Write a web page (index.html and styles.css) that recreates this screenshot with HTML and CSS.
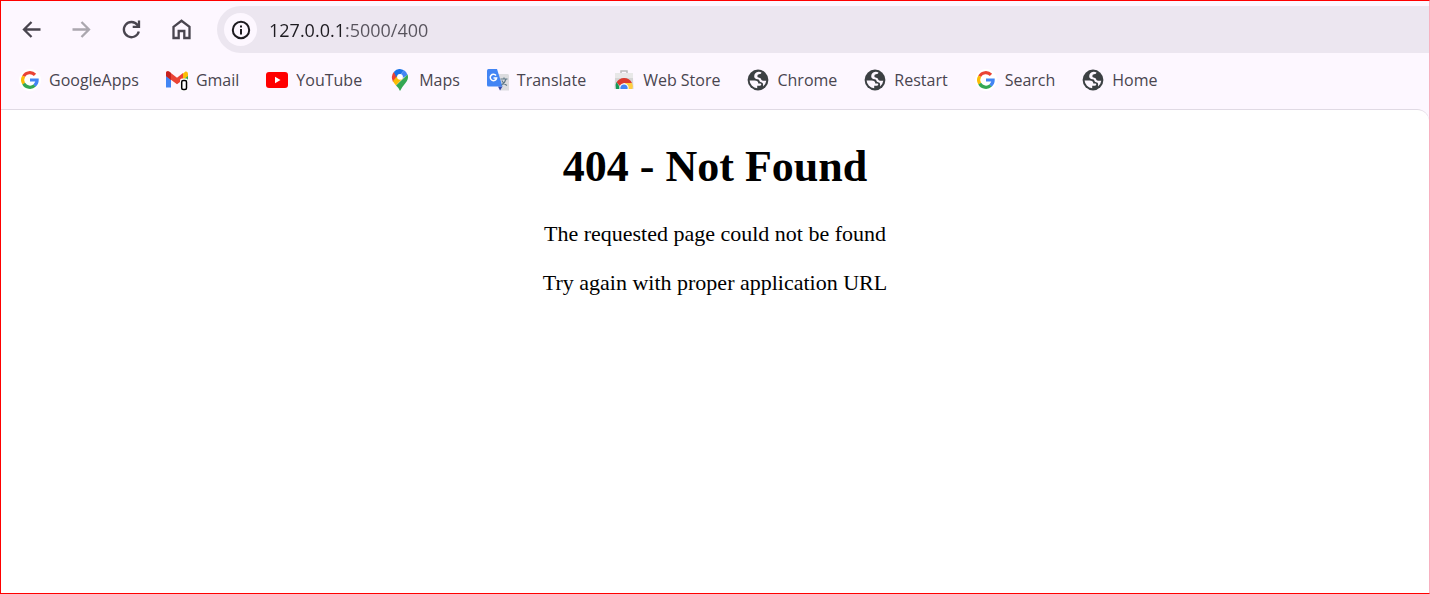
FILE: index.html
```html
<!DOCTYPE html>
<html lang="en">
<head>
<meta charset="utf-8">
<title>404 - Not Found</title>
<link rel="stylesheet" href="styles.css">
</head>
<body>
<svg class="defs" aria-hidden="true">
  <symbol id="google" viewBox="0 0 22 22">
    <circle cx="11" cy="11" r="11" fill="#fff"/>
    <g fill="none" stroke-width="3.2">
      <path d="M4.6 7.3A7.2 7.2 0 0 1 16 5.9" stroke="#ea4335"/>
      <path d="M4.7 14.7A7.2 7.2 0 0 1 4.7 7.3" stroke="#fbbc05"/>
      <path d="M15.8 16.4A7.2 7.2 0 0 1 4.7 14.6" stroke="#34a853"/>
      <path d="M11 11H18.1A7.2 7.2 0 0 1 15.6 16.5" stroke="#4285f4"/>
    </g>
  </symbol>
  <symbol id="globe" viewBox="0 0 22 22">
    <circle cx="11" cy="11" r="10.4" fill="#3c4043"/>
    <path d="M2.600 11.500H7.500Q11.300 11.600 11.300 14.600H13.200Q14.300 14.600 14.300 15.600Q14.300 16.700 13 16.700H10.200V19.300A8.300 8.300 0 0 1 2.600 11.500Z" fill="#fdf7ff"/>
    <path d="M14.500 3.500Q14.500 5.300 12 5.300Q10.300 5.500 10.300 7.200Q10.300 8.600 12.300 8.700Q14 8.900 14.200 10.600Q14.400 11.700 16 11.700H19.300Q18.800 15.300 16 17.500Q16.500 13.800 14.800 13.600Q12.400 13.300 12.200 11.300Q12 10.300 10.500 10.200Q7.200 9.900 7.200 7.200Q7.300 3.500 11.500 2.800Q13.200 2.700 14.500 3.500Z" fill="#fdf7ff"/>
  </symbol>
</svg>
<div class="browser">
  <header class="chrome">
    <div class="toolbar">
      <button class="tool" type="button" aria-label="Back"><svg viewBox="0 0 24 24"><path d="M20.500 11.500H4.500M11.500 4L4 11.500L11.500 19"/></svg></button>
      <button class="tool" type="button" aria-label="Forward" disabled><svg viewBox="0 0 24 24"><path d="M2.500 11.500H18.500M11.500 4L19 11.500L11.500 19"/></svg></button>
      <button class="tool" type="button" aria-label="Reload"><svg viewBox="0 0 24 24"><path d="M18.800 13.500A7.600 7.600 0 1 1 17.500 7L19 8.500M19 2.500V8.800H12.700"/></svg></button>
      <button class="tool" type="button" aria-label="Home page"><svg viewBox="0 0 24 24"><path d="M3.500 8.800L11.500 2.800L19.500 8.800V20H14.300V13H8.700V20H3.500Z"/></svg></button>
      <div class="omnibox">
        <button class="site-info" type="button" aria-label="View site information"><svg viewBox="0 0 20 20"><circle cx="10" cy="10" r="8.200"/><path d="M10 9V14.500M10 5.400V7.400"/></svg></button>
        <input class="address" type="text" aria-label="Address" value="127.0.0.1:5000/400" spellcheck="false">
      </div>
    </div>
    <nav class="bookmarks" aria-label="Bookmarks">
      <a class="bookmark" href="#"><svg class="icon"><use href="#google"/></svg>GoogleApps</a>
      <a class="bookmark" href="#"><svg class="icon" viewBox="0 0 22 22">
        <path d="M0 4V18.500H5V9Z" fill="#4285f4"/><path d="M17 9V18.500H22V5Z" fill="#34a853"/>
        <path d="M17 4.500L19.500 2.500Q22 2 22 5V7L17 11Z" fill="#fbbc04"/>
        <path d="M0 7V4Q0 1.500 3 2.500L11 8.800L17 4V10.800L11 15.200Z" fill="#ea4335"/><path d="M0 7V4Q0 1.500 3 2.500L5 4V11Z" fill="#c5221f"/>
        <rect x="14" y="9.500" width="8" height="12.500" rx="2" fill="#fff"/><rect x="15.700" y="11.500" width="4.800" height="9" rx="1.500" fill="#fff" stroke="#000" stroke-width="1.500"/></svg>Gmail</a>
      <a class="bookmark" href="#"><svg class="icon" viewBox="0 0 22 22"><rect y="3" width="22" height="16" rx="3" fill="#f00"/><path d="M9 7.800V14.200L14.500 11Z" fill="#fff"/></svg>YouTube</a>
      <a class="bookmark" href="#"><svg class="icon" viewBox="0 0 22 22">
        <path d="M4.800 3L11 8L4 13Q1.500 7 4.800 3Z" fill="#ea4335"/>
        <path d="M4.800 3Q9-2 15 1.300L8 9.500Z" fill="#1a73e8"/>
        <path d="M15 1.300Q18 3 18.600 6L12 10L11 6Z" fill="#4285f4"/>
        <path d="M4 12L10 5L14 9L7 16.500Q5 14.500 4 12Z" fill="#fbbc04"/>
        <path d="M18.600 5.500Q20 10 16.500 14Q13 18 11 22Q9.500 18.500 7 16.500Z" fill="#34a853"/>
        <circle cx="11" cy="7.800" r="2.900" fill="#fff"/></svg>Maps</a>
      <a class="bookmark" href="#"><svg class="icon" viewBox="0 0 22 22">
        <path d="M9 5H20.500Q22 5 22 6.500V21.500H13Z" fill="#dcdcdf"/><path d="M11 17.500H15.500L13 21.500Z" fill="#3749ab"/>
        <path d="M1.500 0H10L15.500 17.500H1.500Q0 17.500 0 16V1.500Q0 0 1.500 0Z" fill="#4285f4"/>
        <path d="M9 6.500A3.200 3.200 0 1 0 9.600 9H6.500" fill="none" stroke="#fff" stroke-width="1.500"/>
        <path d="M13.500 10H20.500M17 8.500V10M19 10Q18 14 14.500 16M14.800 11.500Q16.500 15 20 16.500" fill="none" stroke="#607988" stroke-width="1.200"/></svg>Translate</a>
      <a class="bookmark" href="#"><svg class="icon" viewBox="0 0 22 22">
        <path d="M8 4V2H14V4" fill="none" stroke="#bdbdbd" stroke-width="1.500"/><path d="M2 4H20V10H2Z" fill="#e8e8e8"/><path d="M2 9H20L20.500 20H1.500Z" fill="#d5d5d5"/>
        <path d="M3.500 13.500Q6 9 11 9Q16.500 9 19 14H11L7.500 17.500Z" fill="#db3b2f"/>
        <path d="M3.500 13L8 20H3Q1.800 16 3.500 13Z" fill="#159957"/>
        <path d="M12 14H19Q20.500 16.500 19.300 20H12Z" fill="#ffcd40"/>
        <path d="M6.400 20A4.700 4.700 0 1 1 15.600 20Z" fill="#fff"/><path d="M7.400 20A3.700 3.700 0 1 1 14.600 20Z" fill="#4285f4"/></svg>Web Store</a>
      <a class="bookmark" href="#"><svg class="icon"><use href="#globe"/></svg>Chrome</a>
      <a class="bookmark" href="#"><svg class="icon"><use href="#globe"/></svg>Restart</a>
      <a class="bookmark" href="#"><svg class="icon"><use href="#google"/></svg>Search</a>
      <a class="bookmark" href="#"><svg class="icon"><use href="#globe"/></svg>Home</a>
    </nav>
  </header>
  <main class="page">
    <h1 class="title">404 - Not Found</h1>
    <p class="message">The requested page could not be found</p>
    <p class="message">Try again with proper application URL</p>
  </main>
</div>
</body>
</html>
```

FILE: styles.css
```css
* {
  box-sizing: border-box;
}

body {
  margin: 0;
  font-family: "Open Sans", "Noto Sans", sans-serif;
}

.defs {
  display: none;
}

.browser {
  display: flex;
  flex-direction: column;
  min-height: 100vh;
  border: 1px solid #f00;
  border-right-color: #f8b0c0;
  background: #fdf7ff;
}

.toolbar {
  display: flex;
  align-items: center;
  padding: 5px 0 0 6px;
}

.tool {
  display: flex;
  justify-content: center;
  width: 50px;
  padding: 0;
  border: 0;
  background: none;
  color: #49454f;
}

.tool:disabled {
  color: #aba7af;
}

.tool svg {
  width: 24px;
  height: 24px;
  fill: none;
  stroke: currentColor;
  stroke-width: 2.3;
}

.omnibox {
  display: flex;
  flex: 1;
  align-items: center;
  gap: 12px;
  height: 47px;
  margin-left: 10px;
  padding-left: 7px;
  border-radius: 24px 0 0 24px;
  background: #ece6f0;
}

.site-info {
  display: flex;
  align-items: center;
  justify-content: center;
  width: 33px;
  height: 33px;
  padding: 0;
  border: 0;
  border-radius: 50%;
  background: #fdf7ff;
}

.site-info svg {
  width: 20px;
  height: 20px;
  fill: none;
  stroke: #1d1b20;
  stroke-width: 2;
}

.address {
  flex: 1;
  min-width: 0;
  padding: 0;
  border: 0;
  outline: 0;
  background: linear-gradient(90deg, #1d1b20 76px, #57535c 76px) text;
  color: transparent;
  caret-color: #1d1b20;
  font: 18px "Open Sans", "Noto Sans", sans-serif;
}

.bookmarks {
  display: flex;
  align-items: center;
  gap: 27px;
  height: 56px;
  padding: 0 0 2px 18px;
}

.bookmark {
  display: flex;
  align-items: center;
  gap: 8px;
  color: #49454f;
  font-size: 16px;
  line-height: 24px;
  text-decoration: none;
  white-space: nowrap;
}

.icon {
  flex: none;
  width: 22px;
  height: 22px;
}

.page {
  flex: 1;
  padding: 32px 16px;
  border-top: 1px solid #e0dae4;
  border-top-right-radius: 12px;
  background: #fff;
  color: #000;
  font-family: "Liberation Serif", serif;
  text-align: center;
}

.title {
  margin: 0 0 29px;
  font-size: 44px;
  line-height: 50px;
}

.message {
  margin: 0 0 24px;
  font-size: 22px;
  line-height: 25px;
}
```
